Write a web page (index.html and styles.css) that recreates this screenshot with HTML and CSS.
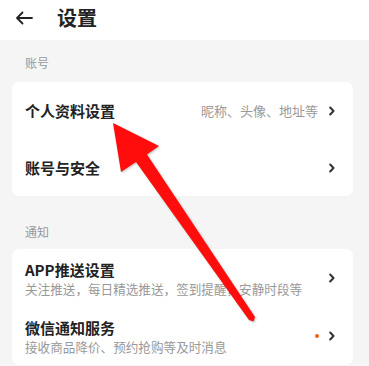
FILE: index.html
```html
<!DOCTYPE html>
<html lang="zh">
<head>
<meta charset="utf-8">
<link rel="stylesheet" href="styles.css">
</head>
<body>
<div class="page">
  <header class="topbar">
    <svg class="back" width="18" height="14" viewBox="0 0 18 14"><path d="M17 7H2M7.5 1.5L2 7l5.5 5.5" fill="none" stroke="#222" stroke-width="1.8" stroke-linecap="round" stroke-linejoin="round"/></svg>
    <h1 class="title">设置</h1>
  </header>

  <div class="section-label first">账号</div>
  <div class="card">
    <div class="row">
      <span class="row-title">个人资料设置</span>
      <span class="row-right"><span class="hint">昵称、头像、地址等</span><svg class="chev" width="6" height="10" viewBox="0 0 6 10"><path d="M1.2 1.5l3.3 3.5-3.3 3.5" fill="none" stroke="#333" stroke-width="2" stroke-linecap="round" stroke-linejoin="round"/></svg></span>
    </div>
    <div class="row">
      <span class="row-title">账号与安全</span>
      <span class="row-right"><svg class="chev" width="6" height="10" viewBox="0 0 6 10"><path d="M1.2 1.5l3.3 3.5-3.3 3.5" fill="none" stroke="#333" stroke-width="2" stroke-linecap="round" stroke-linejoin="round"/></svg></span>
    </div>
  </div>

  <div class="section-label second">通知</div>
  <div class="card">
    <div class="row tall">
      <div class="texts">
        <span class="row-title">APP推送设置</span>
        <span class="sub">关注推送，每日精选推送，签到提醒，安静时段等</span>
      </div>
      <span class="row-right"><svg class="chev" width="6" height="10" viewBox="0 0 6 10"><path d="M1.2 1.5l3.3 3.5-3.3 3.5" fill="none" stroke="#333" stroke-width="2" stroke-linecap="round" stroke-linejoin="round"/></svg></span>
    </div>
    <div class="row tall">
      <div class="texts">
        <span class="row-title">微信通知服务</span>
        <span class="sub">接收商品降价、预约抢购等及时消息</span>
      </div>
      <span class="row-right"><span class="dot"></span><svg class="chev" width="6" height="10" viewBox="0 0 6 10"><path d="M1.2 1.5l3.3 3.5-3.3 3.5" fill="none" stroke="#333" stroke-width="2" stroke-linecap="round" stroke-linejoin="round"/></svg></span>
    </div>
  </div>

  <svg class="pointer" width="369" height="366" viewBox="0 0 369 366">
    <polygon points="113,123 159,146 147,154.5 255,317 253.5,321.5 249,320 136,162 121,172" fill="#ff0d0d"/>
  </svg>
</div>
</body>
</html>
```

FILE: styles.css
```css
* { box-sizing: border-box; }
html, body { margin: 0; padding: 0; }
body {
  background: #f5f5f5;
  font-family: "Noto Sans CJK SC", "Noto Sans", sans-serif;
  color: #222;
  width: 369px;
  height: 366px;
  overflow: hidden;
}
.page { position: relative; width: 369px; height: 366px; }
.topbar {
  height: 40px;
  background: #fff;
  display: flex;
  align-items: center;
  padding-left: 15px;
}
.back { display: block; margin-top: -4px; }
.title {
  margin: -4px 0 0 24px;
  font-size: 20px;
  font-weight: 700;
  line-height: 28px;
  color: #222;
}
.section-label {
  font-size: 12px;
  line-height: 14px;
  color: #999;
  padding-left: 25px;
}
.section-label.first { padding-top: 16px; padding-bottom: 12px; }
.section-label.second { padding-top: 29px; padding-bottom: 10px; }
.card {
  background: #fff;
  border-radius: 7px;
  margin: 0 16px 0 12px;
}
.row {
  height: 57px;
  display: flex;
  align-items: center;
  justify-content: space-between;
  padding: 0 18px 0 13px;
}
.row.tall { height: 58px; }
.row-title {
  font-size: 15px;
  font-weight: 700;
  line-height: 20px;
  color: #222;
}
.texts { display: flex; flex-direction: column; padding-top: 1px; }
.sub {
  font-size: 12.6px;
  line-height: 17px;
  color: #999;
  white-space: nowrap;
}
.row-right { display: flex; align-items: center; }
.hint {
  font-size: 13px;
  line-height: 18px;
  color: #999;
  margin-right: 11px;
}
.chev { display: block; }
.dot {
  width: 4px;
  height: 4px;
  border-radius: 50%;
  background: #ff5a1f;
  margin-right: 10px;
}
.pointer {
  position: absolute;
  left: 0;
  top: 0;
  pointer-events: none;
  filter: drop-shadow(1px 1px 1px rgba(0,0,0,0.25));
}
```
